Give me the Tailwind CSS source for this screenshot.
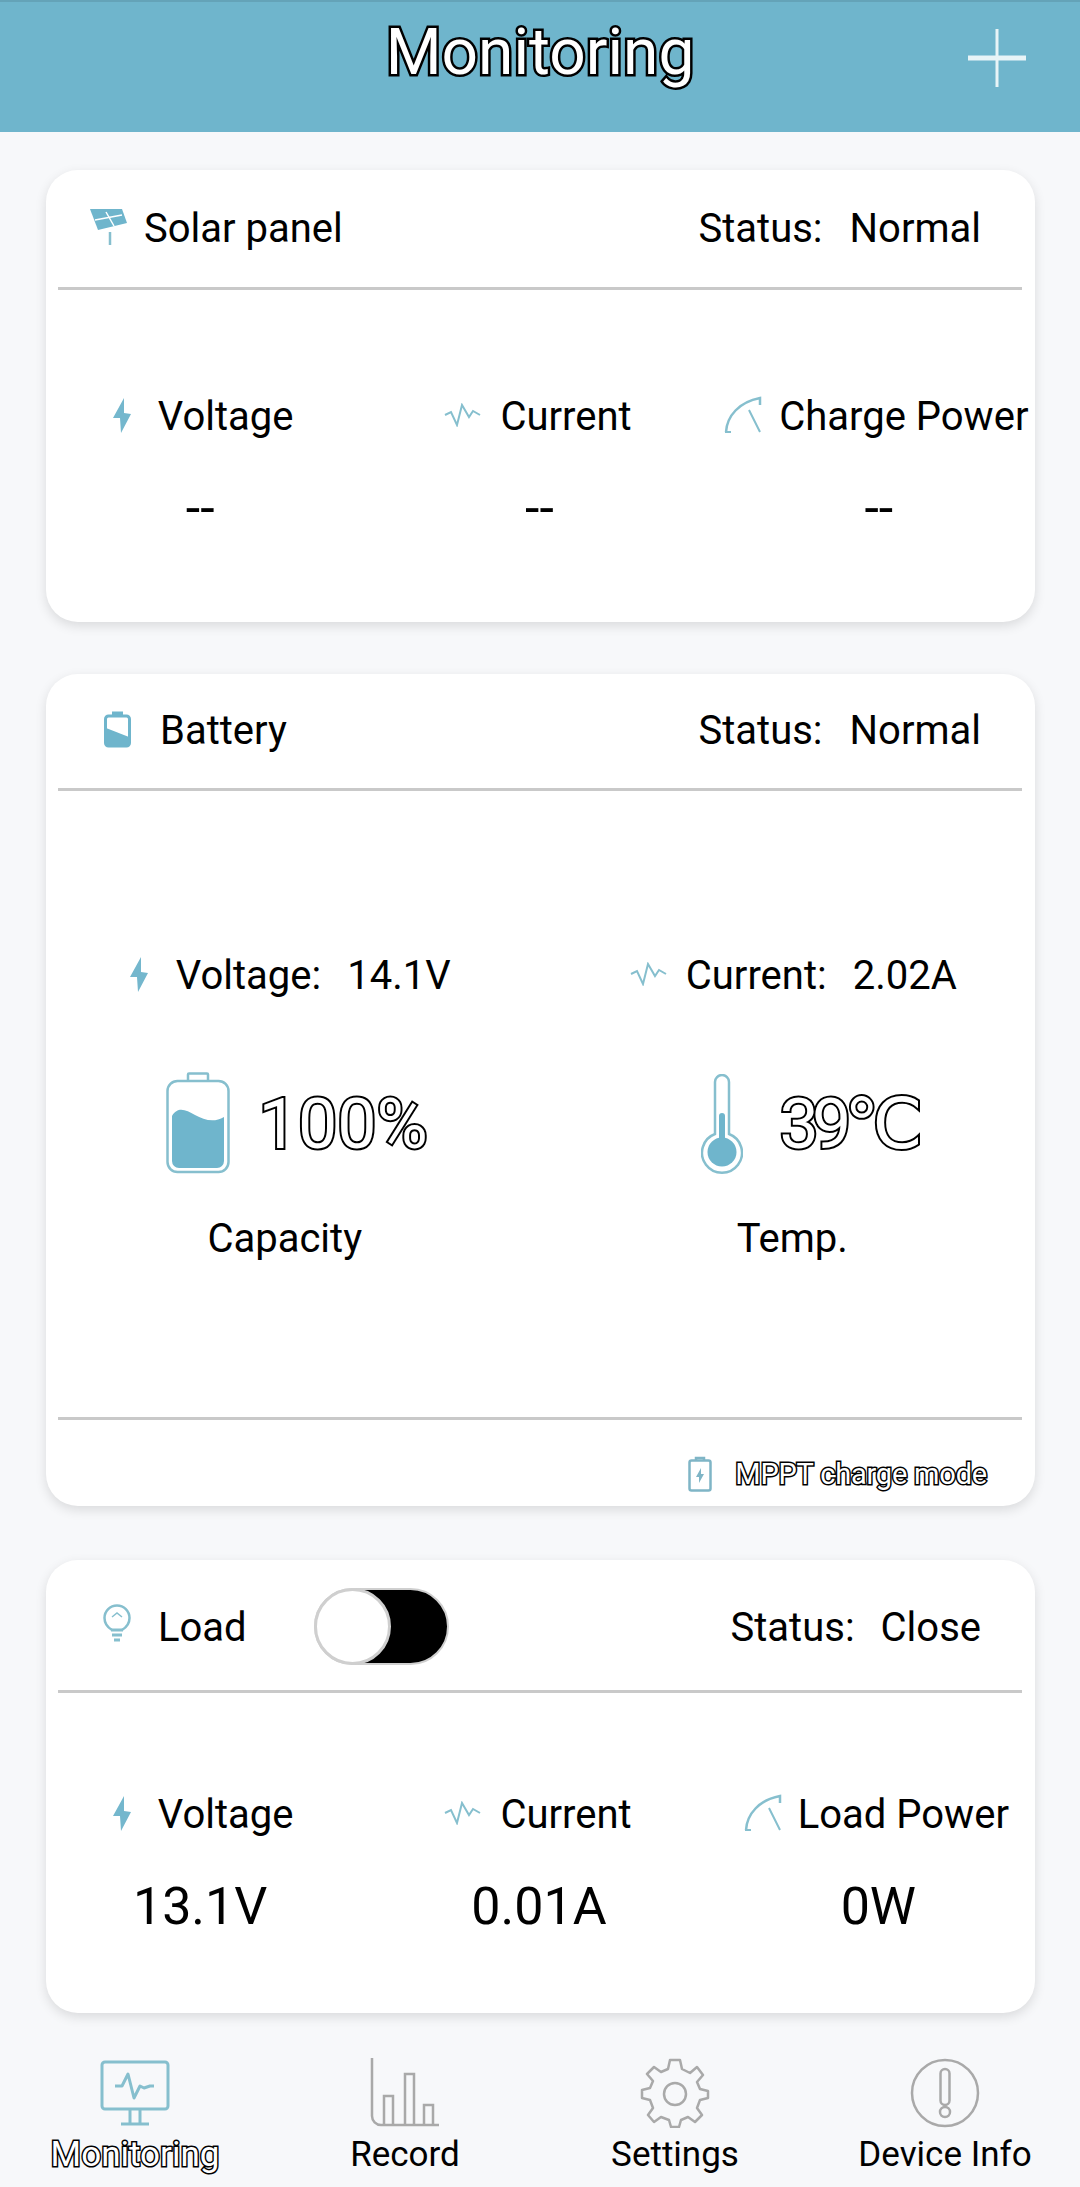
<!DOCTYPE html>
<html lang="en">
<head>
  <meta charset="UTF-8">
  <meta name="viewport" content="width=device-width, initial-scale=1.0">
  <title>Monitoring</title>
  <script src="https://cdn.jsdelivr.net/npm/@tailwindcss/browser@4"></script>
</head>
<body class="w-[1080px] h-[2187px] overflow-hidden flex flex-col bg-[#f7f8fa] text-black [font-family:Roboto,'DejaVu_Sans',sans-serif]">

  <!-- top bar -->
  <header class="relative h-[132px] shrink-0 flex justify-center bg-[#6fb5cc] border-t-2 border-[#64a3b8]">
    <h1 class="mt-[15px] text-[64px] leading-[72px] font-normal text-white [-webkit-text-stroke:5px_#000] [paint-order:stroke_fill]">Monitoring</h1>
    <svg class="absolute right-[54px] top-[27px]" width="58" height="58" viewBox="0 0 58 58">
      <path d="M29 0V58" stroke="#e8f4f7" stroke-width="3"/>
      <path d="M0 29H58" stroke="#e8f4f7" stroke-width="5"/>
    </svg>
  </header>

  <main class="flex-1 flex flex-col pl-[46px] pr-[45px] pt-[38px]">

    <!-- solar panel -->
    <section class="h-[452px] rounded-[32px] bg-white shadow-[0_4px_12px_rgba(0,0,0,0.12)]">
      <div class="h-[117px] flex items-center pl-[44px] pr-[54px] text-[40px] leading-[48px]">
        <svg width="37" height="36" viewBox="0 0 37 36" class="mb-[4px]">
          <polygon points="0,0 32,0 37,14 8,21" fill="#6fb5cc"/>
          <path d="M5 11L32 6M16 3L24 17" stroke="#fff" stroke-width="1.5"/>
          <path d="M20 23V36" stroke="#86bfce" stroke-width="2.5"/>
        </svg>
        <span class="ml-[17px]">Solar panel</span>
        <span class="ml-auto">Status:</span>
        <span class="ml-[27px]">Normal</span>
      </div>
      <div class="h-[3px] ml-[12px] mr-[13px] bg-[#c9c9c9]"></div>
      <div class="-mx-[16px] pt-[103px] grid grid-cols-3 text-center text-[40px] leading-[48px]">
        <div class="flex flex-col items-center">
          <div class="ml-[6px] flex items-center">
            <svg width="18" height="35" viewBox="0 0 18 35" class="mb-[4px]"><polygon points="11,0 0,20 7,20 8,35 18,16 11,15" fill="#74b7cd"/></svg>
            <span class="ml-[27px]">Voltage</span>
          </div>
          <div class="mt-[38px] text-[52px] leading-[60px]">--</div>
        </div>
        <div class="flex flex-col items-center">
          <div class="mr-[5px] flex items-center">
            <svg width="37" height="24" viewBox="0 0 37 24" fill="none" class="mb-[4px]"><path d="M1 12L7 9L13 22L18 2L25 14L29 8L36 12" stroke="#86bfce" stroke-width="2"/></svg>
            <span class="ml-[19px]">Current</span>
          </div>
          <div class="mr-[2px] mt-[38px] text-[52px] leading-[60px]">--</div>
        </div>
        <div class="flex flex-col items-center">
          <div class="mr-[9px] flex items-center">
            <svg width="38" height="38" viewBox="0 0 38 38" fill="none" class="mb-[4px]"><path d="M2 36C3 20 15 6 36 2V9" stroke="#86bfce" stroke-width="2.5"/><path d="M25 14L36 36M1 36H7" stroke="#86bfce" stroke-width="2"/></svg>
            <span class="ml-[17px] whitespace-nowrap">Charge Power</span>
          </div>
          <div class="mr-[4px] mt-[38px] text-[52px] leading-[60px]">--</div>
        </div>
      </div>
    </section>

    <!-- battery -->
    <section class="mt-[52px] h-[832px] rounded-[32px] bg-white shadow-[0_4px_12px_rgba(0,0,0,0.12)] flex flex-col">
      <div class="h-[114px] shrink-0 flex items-center pl-[58px] pr-[54px] text-[40px] leading-[48px]">
        <svg width="27" height="37" viewBox="0 0 27 37" class="mb-[4px]">
          <path d="M9 4V1.5h9V4" fill="#6fb5cc" stroke="#6fb5cc" stroke-width="2"/>
          <rect x="1.5" y="5" width="24" height="30" rx="3" fill="#fff" stroke="#6fb5cc" stroke-width="3"/>
          <path d="M2 17L25 26V32a3 3 0 0 1-3 3H5a3 3 0 0 1-3-3Z" fill="#6fb5cc"/>
        </svg>
        <span class="ml-[29px]">Battery</span>
        <span class="ml-auto">Status:</span>
        <span class="ml-[27px]">Normal</span>
      </div>
      <div class="h-[3px] shrink-0 ml-[12px] mr-[13px] bg-[#c9c9c9]"></div>
      <div class="flex-1 -mx-[11px] grid grid-cols-2 content-start pt-[161px] text-[40px] leading-[48px]">
        <div class="flex flex-col items-center">
          <div class="ml-[5px] flex items-center">
            <svg width="18" height="35" viewBox="0 0 18 35" class="mb-[4px]"><polygon points="11,0 0,20 7,20 8,35 18,16 11,15" fill="#74b7cd"/></svg>
            <span class="ml-[28px]">Voltage:</span>
            <span class="ml-[26px]">14.1V</span>
          </div>
          <div class="mt-[74px] ml-[18px] flex items-center">
            <svg width="64" height="103" viewBox="0 0 64 103" fill="none" class="-mt-[3px]">
              <path d="M22 11V3.500a1 1 0 0 1 1-1H41a1 1 0 0 1 1 1V11" stroke="#86bfce" stroke-width="2.5"/>
              <rect x="1.5" y="10" width="61" height="91" rx="10" stroke="#86bfce" stroke-width="2.5"/>
              <path d="M6 45C12 35 20 39 29 44S48 52 58 46V90a7 7 0 0 1-7 7H13a7 7 0 0 1-7-7Z" fill="#6fb5cc"/>
            </svg>
            <span class="ml-[29px] text-[70px] leading-[80px] text-white [-webkit-text-stroke:4px_#000] [paint-order:stroke_fill]">100%</span>
          </div>
          <div class="mt-[41px] -ml-[6px]">Capacity</div>
        </div>
        <div class="flex flex-col items-center">
          <div class="flex items-center">
            <svg width="37" height="24" viewBox="0 0 37 24" fill="none" class="mb-[4px]"><path d="M1 12L7 9L13 22L18 2L25 14L29 8L36 12" stroke="#86bfce" stroke-width="2"/></svg>
            <span class="ml-[19px]">Current:</span>
            <span class="ml-[26px]">2.02A</span>
          </div>
          <div class="mt-[74px] ml-[30px] flex items-center">
            <svg width="42" height="100" viewBox="0 0 42 100" fill="none">
              <path d="M14 60V8a7 7 0 0 1 14 0V60a20 20 0 1 1-14 0Z" stroke="#86bfce" stroke-width="2.5"/>
              <path d="M18 68V42a3 3 0 0 1 6 0V68Z" fill="#6fb5cc"/>
              <circle cx="21" cy="78" r="14.5" fill="#6fb5cc"/>
            </svg>
            <span class="ml-[37px] text-[70px] leading-[80px] tracking-[-7px] text-white [-webkit-text-stroke:4px_#000] [paint-order:stroke_fill]">39℃</span>
          </div>
          <div class="mt-[41px] -ml-[2px]">Temp.</div>
        </div>
      </div>
      <div class="h-[3px] shrink-0 ml-[12px] mr-[13px] bg-[#c9c9c9]"></div>
      <div class="h-[86px] shrink-0 flex items-center justify-end pr-[48px] pt-[22px]">
        <svg width="24" height="36" viewBox="0 0 24 36" fill="none">
          <path d="M8 4V2h8v2" stroke="#7fb5c6" stroke-width="2.5"/>
          <rect x="1.5" y="4.5" width="21" height="30" rx="2" stroke="#7fb5c6" stroke-width="2.5"/>
          <polygon points="13,12 8,21 11,21 11,27 16,18 13,18" fill="#7fb5c6"/>
        </svg>
        <span class="ml-[23px] text-[29px] leading-[34px] tracking-[-0.2px] text-white [-webkit-text-stroke:3px_#000] [paint-order:stroke_fill]">MPPT charge mode</span>
      </div>
    </section>

    <!-- load -->
    <section class="mt-[54px] h-[453px] rounded-[32px] bg-white shadow-[0_4px_12px_rgba(0,0,0,0.12)]">
      <div class="h-[130px] flex items-center pl-[57px] pr-[54px] text-[40px] leading-[48px]">
        <svg width="28" height="38" viewBox="0 0 28 38" fill="none" class="mb-[4px]">
          <path d="M9 26C4 23 1.5 19 1.5 14a12.5 12.5 0 0 1 25 0C26.500 19 24 23 19 26" stroke="#86bfce" stroke-width="2.5"/>
          <path d="M9 13L14 9L19 13" stroke="#86bfce" stroke-width="1.500"/>
          <path d="M8 26H20M9 31H19M11 36H17" stroke="#86bfce" stroke-width="3"/>
        </svg>
        <span class="ml-[27px] mt-[6px]">Load</span>
        <div class="relative ml-[67px] mt-[2px] w-[135px] h-[77px] rounded-full bg-black border-2 border-[#cfcfcf]">
          <div class="absolute -left-[2px] -top-[2px] w-[77px] h-[77px] rounded-full bg-white border-[3px] border-[#cfcfcf]"></div>
        </div>
        <span class="ml-auto mt-[6px]">Status:</span>
        <span class="ml-[26px] mt-[6px]">Close</span>
      </div>
      <div class="h-[3px] ml-[12px] mr-[13px] bg-[#c9c9c9]"></div>
      <div class="-mx-[16px] pt-[98px] grid grid-cols-3 text-center text-[40px] leading-[48px]">
        <div class="flex flex-col items-center">
          <div class="ml-[6px] flex items-center">
            <svg width="18" height="35" viewBox="0 0 18 35" class="mb-[4px]"><polygon points="11,0 0,20 7,20 8,35 18,16 11,15" fill="#74b7cd"/></svg>
            <span class="ml-[27px]">Voltage</span>
          </div>
          <div class="mt-[38px] text-[52px] leading-[60px]">13.1V</div>
        </div>
        <div class="flex flex-col items-center">
          <div class="mr-[5px] flex items-center">
            <svg width="37" height="24" viewBox="0 0 37 24" fill="none" class="mb-[4px]"><path d="M1 12L7 9L13 22L18 2L25 14L29 8L36 12" stroke="#86bfce" stroke-width="2"/></svg>
            <span class="ml-[19px]">Current</span>
          </div>
          <div class="mr-[3px] mt-[38px] text-[52px] leading-[60px]">0.01A</div>
        </div>
        <div class="flex flex-col items-center">
          <div class="mr-[9px] flex items-center">
            <svg width="38" height="38" viewBox="0 0 38 38" fill="none" class="mb-[4px]"><path d="M2 36C3 20 15 6 36 2V9" stroke="#86bfce" stroke-width="2.5"/><path d="M25 14L36 36M1 36H7" stroke="#86bfce" stroke-width="2"/></svg>
            <span class="ml-[16px] whitespace-nowrap">Load Power</span>
          </div>
          <div class="mr-[5px] mt-[38px] text-[52px] leading-[60px]">0W</div>
        </div>
      </div>
    </section>
  </main>

  <!-- bottom tabs -->
  <nav class="h-[129px] shrink-0 grid grid-cols-4 text-[35px] leading-[40px] text-center">
    <div class="flex flex-col items-center">
      <svg width="70" height="70" viewBox="0 0 70 70" fill="none" stroke="#86bfce">
        <rect x="2" y="4" width="66" height="47" rx="3" stroke-width="3"/>
        <path d="M15 28H22L28 16L34 40L40 28L44 30L50 28H54" stroke-width="3" stroke-linejoin="round"/>
        <path d="M30 51V66M40 51V66M21 66H49" stroke-width="3"/>
      </svg>
      <span class="mt-[7px] text-white [-webkit-text-stroke:3px_#000] [paint-order:stroke_fill]">Monitoring</span>
    </div>
    <div class="flex flex-col items-center">
      <svg width="70" height="70" viewBox="0 0 70 70" fill="none" stroke="#a9a9a9" stroke-width="2.500">
        <path d="M2 0V58a9 9 0 0 0 9 9H69"/>
        <path d="M14 67V38h9V67M35 67V16h9V67M54 67V47h9V67"/>
      </svg>
      <span class="mt-[7px]">Record</span>
    </div>
    <div class="flex flex-col items-center">
      <svg width="70" height="70" viewBox="0 0 70 70" fill="none" stroke="#a9a9a9" stroke-width="2.500" stroke-linejoin="round">
        <path d="M30 2H40L42 11L50 15L57 9L63 17L57 24L60 31L68 33V37L68 40L60 42L57 50L62 57L55 64L48 59L41 62L39 69H31L29 62L21 59L14 64L8 57L13 50L10 42L2 40V32L10 30L13 23L7 16L14 9L21 14L28 11Z"/>
        <circle cx="35" cy="36" r="11"/>
      </svg>
      <span class="mt-[7px]">Settings</span>
    </div>
    <div class="flex flex-col items-center">
      <svg width="70" height="70" viewBox="0 0 70 70" fill="none" stroke="#a9a9a9" stroke-width="2.500">
        <circle cx="35" cy="35" r="33"/>
        <rect x="30.500" y="11" width="9" height="36" rx="4.500"/>
        <circle cx="35" cy="54" r="5"/>
      </svg>
      <span class="mt-[7px]">Device Info</span>
    </div>
  </nav>
</body>
</html>
